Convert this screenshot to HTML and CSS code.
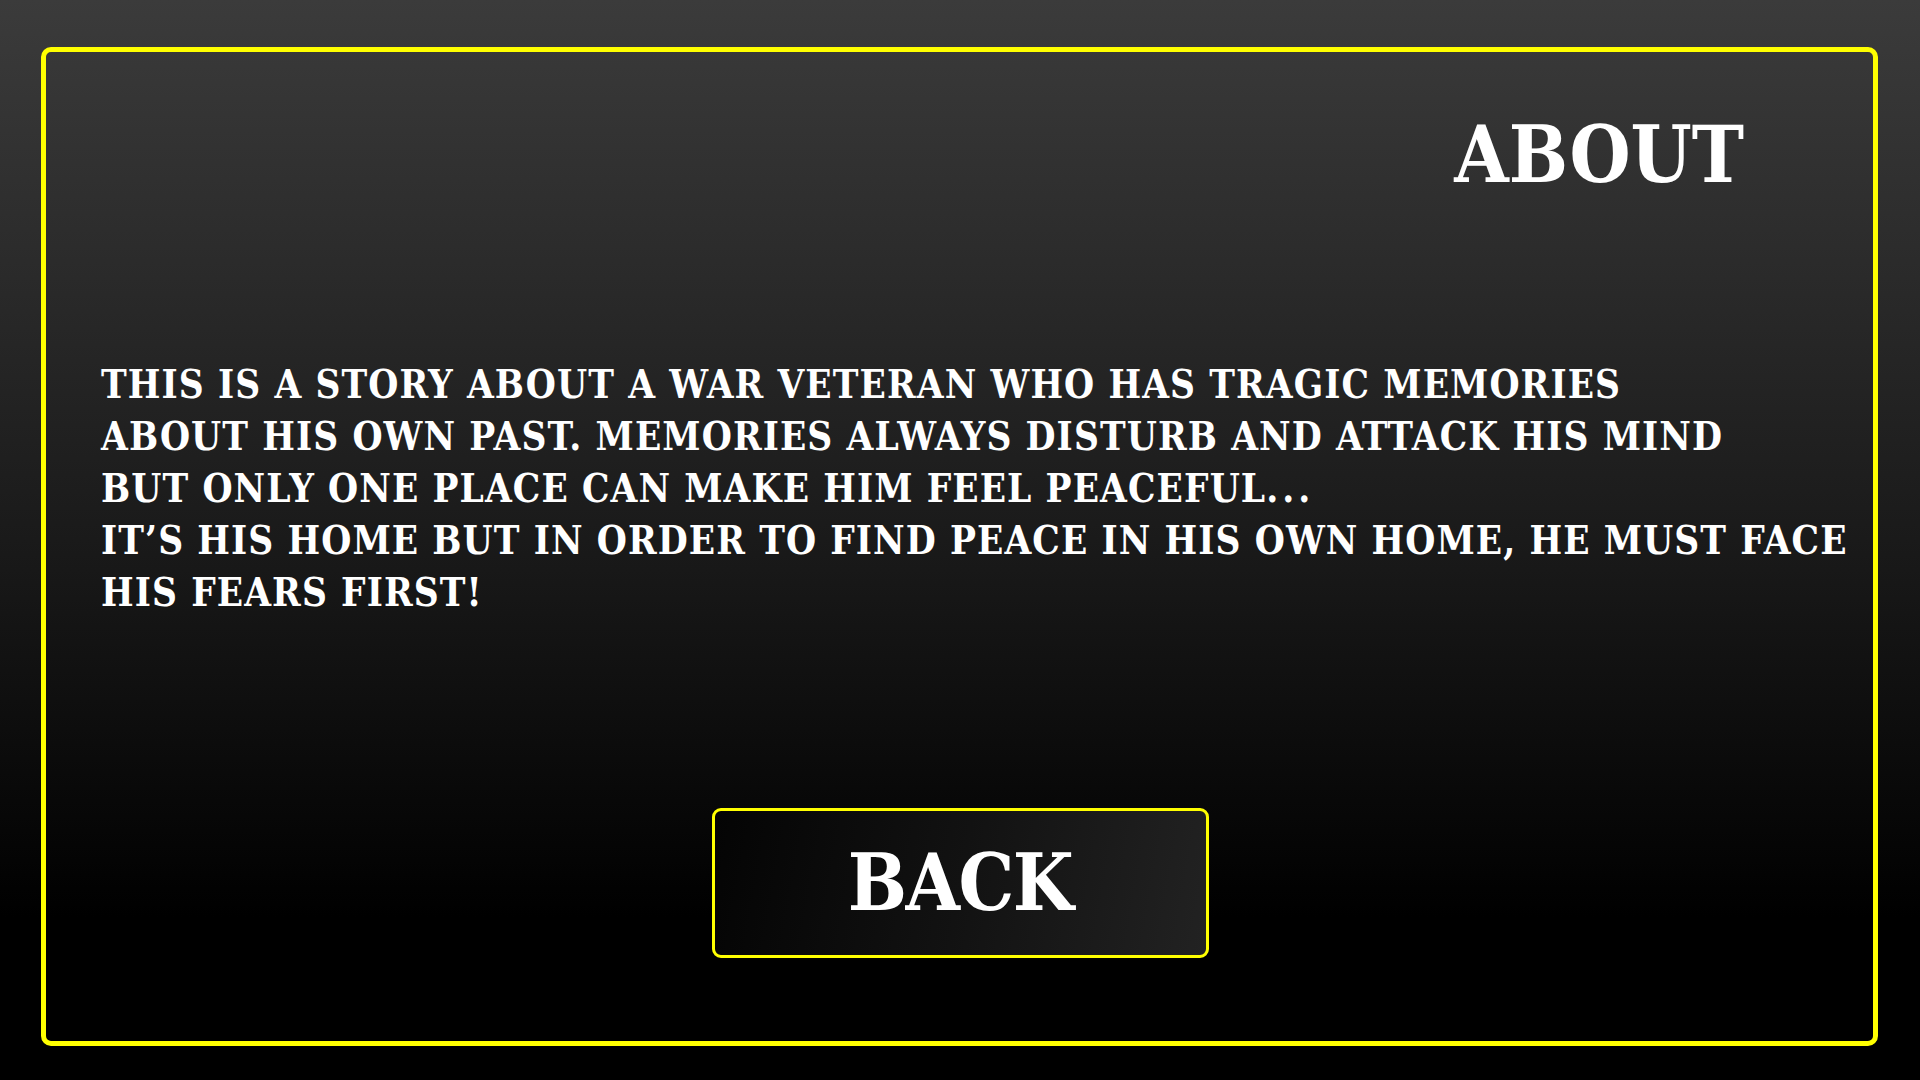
FILE: index.html
```html
<!DOCTYPE html>
<html lang="en">
<head>
<meta charset="utf-8">
<title>About</title>
<link rel="stylesheet" href="styles.css">
</head>
<body>
<main class="frame">
  <h1 class="title">ABOUT</h1>
  <p class="story">THIS IS A STORY ABOUT A WAR VETERAN WHO HAS TRAGIC MEMORIES<br>ABOUT HIS OWN PAST. MEMORIES ALWAYS DISTURB AND ATTACK HIS MIND<br>BUT ONLY ONE PLACE CAN MAKE HIM FEEL PEACEFUL<span class="dots">...</span><br>IT’S HIS HOME BUT IN ORDER TO FIND PEACE IN HIS OWN HOME, HE MUST FACE<br>HIS FEARS FIRST!</p>
  <div class="actions">
    <button class="back" type="button">BACK</button>
  </div>
</main>
</body>
</html>
```
FILE: styles.css
```css
html, body {
  margin: 0;
  padding: 0;
  width: 1920px;
  height: 1080px;
  overflow: hidden;
}
body {
  background: linear-gradient(to bottom, #3b3b3b 0%, #1a1a1a 50%, #000 85%, #000 100%);
  font-family: "DejaVu Serif Condensed", "DejaVu Serif", "Liberation Serif", serif;
  color: #fff;
}
.frame {
  box-sizing: border-box;
  margin: 47px 42px 0 41px;
  height: 999px;
  border: 5px solid #ffff00;
  border-radius: 10px;
  display: flex;
  flex-direction: column;
}
.title {
  margin: 64px 129px 0 0;
  font-size: 78px;
  line-height: 78px;
  font-weight: bold;
  text-align: right;
}
.story {
  margin: 165px 0 0 55px;
  font-size: 38.4px;
  line-height: 52px;
  font-weight: bold;
  letter-spacing: 1.1px;
  white-space: nowrap;
}
.dots {
  letter-spacing: 4px;
}
.actions {
  margin-top: 189px;
  display: flex;
  justify-content: center;
}
.back {
  box-sizing: border-box;
  width: 497px;
  height: 150px;
  border: 3px solid #ffff00;
  border-radius: 9px;
  background: linear-gradient(100deg, #040404 0%, #121212 50%, #222 100%);
  color: #fff;
  font-family: "DejaVu Serif Condensed", "DejaVu Serif", serif;
  font-size: 78px;
  font-weight: bold;
  letter-spacing: -1.5px;
  line-height: 1;
  padding: 0;
  margin-left: 1px;
}
```
